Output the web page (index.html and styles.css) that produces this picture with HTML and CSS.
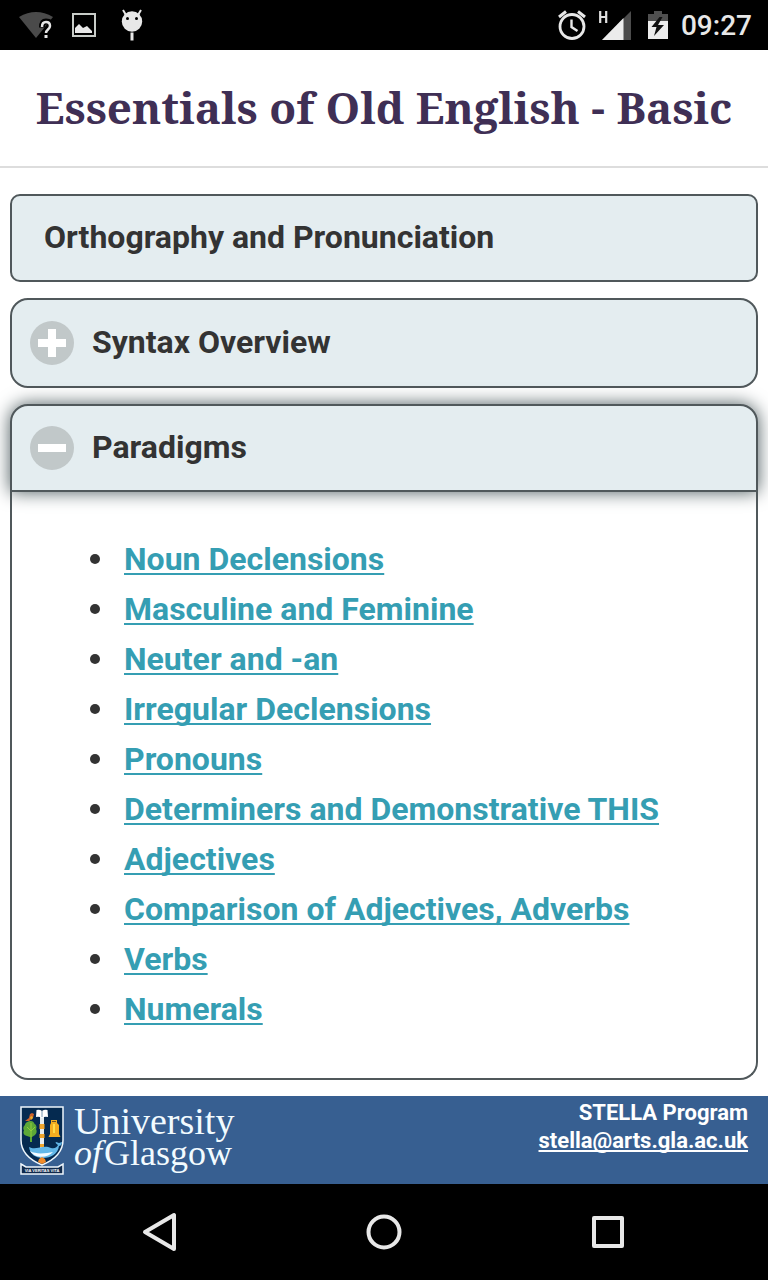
FILE: index.html
```html
<!DOCTYPE html>
<html lang="en">
<head>
<meta charset="utf-8">
<meta name="viewport" content="width=device-width">
<title>Essentials of Old English - Basic</title>
<link rel="stylesheet" href="styles.css">
</head>
<body>
<div class="statusbar">
  <div class="status-group status-left">
    <svg width="36" height="30" viewBox="0 0 36 30" aria-hidden="true"><path d="M1 7Q18-3 35 7L18 28Z" fill="#4a4a4a"/><path d="M24 17.500q0-6 4-6 5 0 5 4c0 4-4.500 4-4.500 8v4" fill="none" stroke="#000" stroke-width="6"/><path d="M24 17q0-5 4-5 4 0 4 4c0 3.500-4 3.500-4 7" fill="none" stroke="#e6e6e6" stroke-width="2.500"/><path d="M26.500 25h3v3h-3z" fill="#e6e6e6"/></svg>
    <svg width="24" height="24" viewBox="0 0 24 24" aria-hidden="true"><path d="M1 1h22v22H1z" fill="none" stroke="#c8ccc8" stroke-width="2"/><path d="M3 20v-5l4-4 4 4 4-2 5 5v2z" fill="#e8e8e8"/></svg>
    <svg width="22" height="32" viewBox="0 0 22 32" aria-hidden="true"><path d="M5 6L2 1M17 6l3-5" stroke="#e8e8e8" stroke-width="2"/><circle cx="11" cy="12.500" r="10.200" fill="#e8e8e8"/><circle cx="6.500" cy="9.500" r="1.500"/><circle cx="15.500" cy="9.500" r="1.500"/><path d="M9.500 23.500h3v8h-3z" fill="#e8e8e8"/></svg>
  </div>
  <div class="status-group status-right">
    <svg width="28" height="30" viewBox="0 0 28 30" aria-hidden="true"><g fill="none" stroke="#e8e8e8"><circle cx="14" cy="16.500" r="12" stroke-width="2.800"/><path d="M1 7l7-5.500M27 7l-7-5.500" stroke-width="3"/><path d="M13.500 9.500v7.500l6 4" stroke-width="2.400"/></g></svg>
    <svg width="32" height="30" viewBox="0 0 32 30" aria-hidden="true"><path d="M32 1v29H3z" fill="#4c4c4c"/><path d="M24.500 8v22H3z" fill="#ececec"/><path d="M1.200 1v12M7.200 1v12M1 7h6" stroke="#e0e0e0" stroke-width="2.200"/></svg>
    <svg width="20" height="30" viewBox="0 0 20 30" aria-hidden="true"><path d="M0 11V4h6V1h8v3h6v7z" fill="#505050"/><path d="M0 11h20v18H0z" fill="#ececec"/><path d="M11.500 7L3.500 17h5L6 26l10-11h-6l4.500-8z" fill="#111"/></svg>
    <span class="clock">09:27</span>
  </div>
</div>
<header class="page-header"><h1 class="title">Essentials of Old English - Basic</h1></header>
<main class="content">
  <button type="button" class="card card-plain">Orthography and Pronunciation</button>
  <button type="button" class="card card-toggle" aria-expanded="false">
    <svg class="toggle-icon" viewBox="0 0 44 44" aria-hidden="true"><circle cx="22" cy="22" r="22" fill="#c1c8c9"/><path d="M8 18h10V8h8v10h10v8H26v10h-8V26H8z" fill="#fff"/></svg>
    Syntax Overview
  </button>
  <section class="group">
    <button type="button" class="card card-toggle card-open" aria-expanded="true" aria-controls="paradigms">
      <svg class="toggle-icon" viewBox="0 0 44 44" aria-hidden="true"><circle cx="22" cy="22" r="22" fill="#c1c8c9"/><path d="M8 18h28v8H8z" fill="#fff"/></svg>
      Paradigms
    </button>
    <div class="panel" id="paradigms">
      <ul class="links">
        <li><a href="#">Noun Declensions</a></li>
        <li><a href="#">Masculine and Feminine</a></li>
        <li><a href="#">Neuter and -an</a></li>
        <li><a href="#">Irregular Declensions</a></li>
        <li><a href="#">Pronouns</a></li>
        <li><a href="#">Determiners and Demonstrative THIS</a></li>
        <li><a href="#">Adjectives</a></li>
        <li><a href="#">Comparison of Adjectives, Adverbs</a></li>
        <li><a href="#">Verbs</a></li>
        <li><a href="#">Numerals</a></li>
      </ul>
    </div>
  </section>
</main>
<footer class="footer">
  <div class="brand">
    <svg class="crest" width="44" height="70" viewBox="0 0 44 70" aria-hidden="true">
      <path d="M1 2h42v33c0 13-9 20-21 25C10 55 1 48 1 35z" fill="#052a50" stroke="#eef6fc" stroke-width="1.500"/>
      <path d="M20 11h4v42h-4z" fill="#e6edf0"/>
      <path d="M19.500 19h5v5h-5zM19.500 29h5v4h-5zM20 39h4v3h-4z" fill="#f0a62c"/>
      <path d="M16.500 5q3-1 5.500 1 2.500-2 5.500-1l.5 7q-3-1-6 1-3-2-6-1z" fill="#fff"/>
      <path d="M22 6v6" stroke="#7b98b0"/>
      <path d="M11 16c3 0 3 3 4.500 3.500 1.500 2 1 3.500.5 4.500 1.500 3 0 5-1 6l-3 2v5h-2v-5l-3-1c-4-1-4-4-3-5.500-1.500-3 0-4.500 1-5.500 0-2 3-4 6-4z" fill="#5da837"/>
      <path d="M11 18v14M7 22l4 4 4-4" fill="none" stroke="#91cf3c"/>
      <path d="M5 16l4-3 1-4 2-1 2 1-1 4-4 3z" fill="#cf632c"/>
      <path d="M10 12l2-1 1 2-2 2z" fill="#e7b52d"/>
      <path d="M31 15h6v3l2 2v9l1.500 3h-12l1.500-3v-9l1-2z" fill="#f5ae21"/>
      <path d="M33 19h2v9h-2z" fill="#ffdc4a"/><path d="M32 16.500h4" stroke="#6d5424"/>
      <path d="M9 42c7 4 14-3 22 1 4 1 6-1 7-3-2-1-3-3-2-3l3 1 3-1c0 3-2 4-3 4-1 8-8 12-16 12S10 49 9 42z" fill="#62b7e8"/>
      <path d="M10 46c7 4 17 2 23 1-5 6-18 7-23-1z" fill="#f4fbff"/>
      <path d="M19 54l3-2 3 2 1 3-4 2-4-2z" fill="#f28b29"/>
      <path d="M1 59l5 3h32l5-3v10H1z" fill="#112b4d" stroke="#eef6fc" stroke-width="1.500"/>
      <text class="motto" x="22" y="67" text-anchor="middle">VIA VERITAS VITA</text>
    </svg>
    <div class="wordmark"><span>University</span><span class="wordmark-place"><i>of</i> Glasgow</span></div>
  </div>
  <div class="contact"><span>STELLA Program</span><a href="mailto:stella@arts.gla.ac.uk">stella@arts.gla.ac.uk</a></div>
</footer>
<nav class="navbar" aria-label="System">
  <button type="button" aria-label="Back"><svg viewBox="0 0 40 40" aria-hidden="true"><path d="M5 20L34 3v34z"/></svg></button>
  <button type="button" aria-label="Home"><svg viewBox="0 0 40 40" aria-hidden="true"><circle cx="20" cy="20" r="15.500"/></svg></button>
  <button type="button" aria-label="Recent apps"><svg viewBox="0 0 40 40" aria-hidden="true"><path d="M6 6h28v28H6z"/></svg></button>
</nav>
</body>
</html>
```
FILE: styles.css
```css
* { box-sizing: border-box; }

body {
  margin: 0;
  min-height: 100vh;
  display: flex;
  flex-direction: column;
  background: #fff;
  color: #333;
  font: bold 32px/40px Roboto, sans-serif;
}

svg { display: block; flex: none; }

.statusbar {
  height: 50px;
  padding: 0 16px 0 18px;
  display: flex;
  justify-content: space-between;
  align-items: center;
  background: #000;
}

.status-group { display: flex; align-items: center; }
.status-left { gap: 18px; }
.status-left svg:last-child { margin-left: 7px; }
.status-right { gap: 13px; }
.status-right svg:nth-child(3) { margin-left: 4px; }

.clock {
  padding-top: 2px;
  color: #e8e8e8;
  font-size: 28px;
  font-weight: 500;
}

.page-header {
  padding: 24px 0 26px;
  border-bottom: 2px solid #ddd;
  text-align: center;
}

.title {
  margin: 0;
  color: #3f2f55;
  font: bold 44px/66px "Noto Serif", "Droid Serif", "Liberation Serif", serif;
}

.content {
  flex: 1;
  padding: 26px 10px 16px;
  display: flex;
  flex-direction: column;
  gap: 16px;
}

.card {
  width: 100%;
  min-height: 88px;
  margin: 0;
  padding: 0 32px 2px;
  border: 2px solid #50585b;
  border-radius: 10px;
  background: #e4edf0;
  color: #333;
  font: inherit;
  text-align: left;
}

.card-toggle {
  min-height: 90px;
  padding: 0 18px 2px;
  display: flex;
  align-items: center;
  gap: 18px;
  border-radius: 18px;
}

.card-open {
  min-height: 88px;
  border-radius: 18px 18px 0 0;
  box-shadow: 0 0 18px #4c5b5e;
}

.toggle-icon { width: 44px; height: 44px; margin-top: 2px; }

.group {
  flex: 1;
  display: flex;
  flex-direction: column;
}

.panel {
  flex: 1;
  padding: 42px 32px 44px;
  border: 2px solid #50585b;
  border-top: 0;
  border-radius: 0 0 18px 18px;
}

.links {
  margin: 0;
  padding-left: 46px;
  line-height: 50px;
  list-style: none;
}

.links li {
  display: flex;
  align-items: center;
  gap: 24px;
}

.links li::before {
  content: "";
  flex: none;
  width: 10px;
  height: 10px;
  border-radius: 50%;
  background: #333;
}

.links a {
  color: #359eb3;
  text-decoration-thickness: 2px;
  text-underline-offset: 3px;
  text-decoration-skip-ink: none;
}

.footer {
  height: 88px;
  padding: 0 20px;
  display: flex;
  justify-content: space-between;
  background: #375f91;
  color: #fff;
}

.brand { display: flex; gap: 10px; padding-top: 9px; }
.motto { fill: #fff; font: bold 4px "Liberation Sans", sans-serif; }

.wordmark {
  display: flex;
  flex-direction: column;
  color: #f2fbff;
  font: 38px/32px "Liberation Serif", serif;
}

.wordmark-place {
  display: flex;
  gap: 2px;
  font-size: 36px;
}

.contact {
  padding-top: 3px;
  display: flex;
  flex-direction: column;
  align-items: flex-end;
  font-size: 22px;
  line-height: 28px;
}

.contact a {
  color: inherit;
  text-decoration-thickness: 2px;
  text-underline-offset: 2px;
  text-decoration-skip-ink: none;
}

.navbar {
  height: 96px;
  padding: 0 48px;
  display: flex;
  background: #000;
}

.navbar button {
  flex: 1;
  padding: 0;
  display: flex;
  align-items: center;
  justify-content: center;
  border: 0;
  background: none;
}

.navbar svg {
  width: 40px;
  height: 40px;
  fill: none;
  stroke: #e8e8e8;
  stroke-width: 4;
  stroke-linejoin: round;
}
```
